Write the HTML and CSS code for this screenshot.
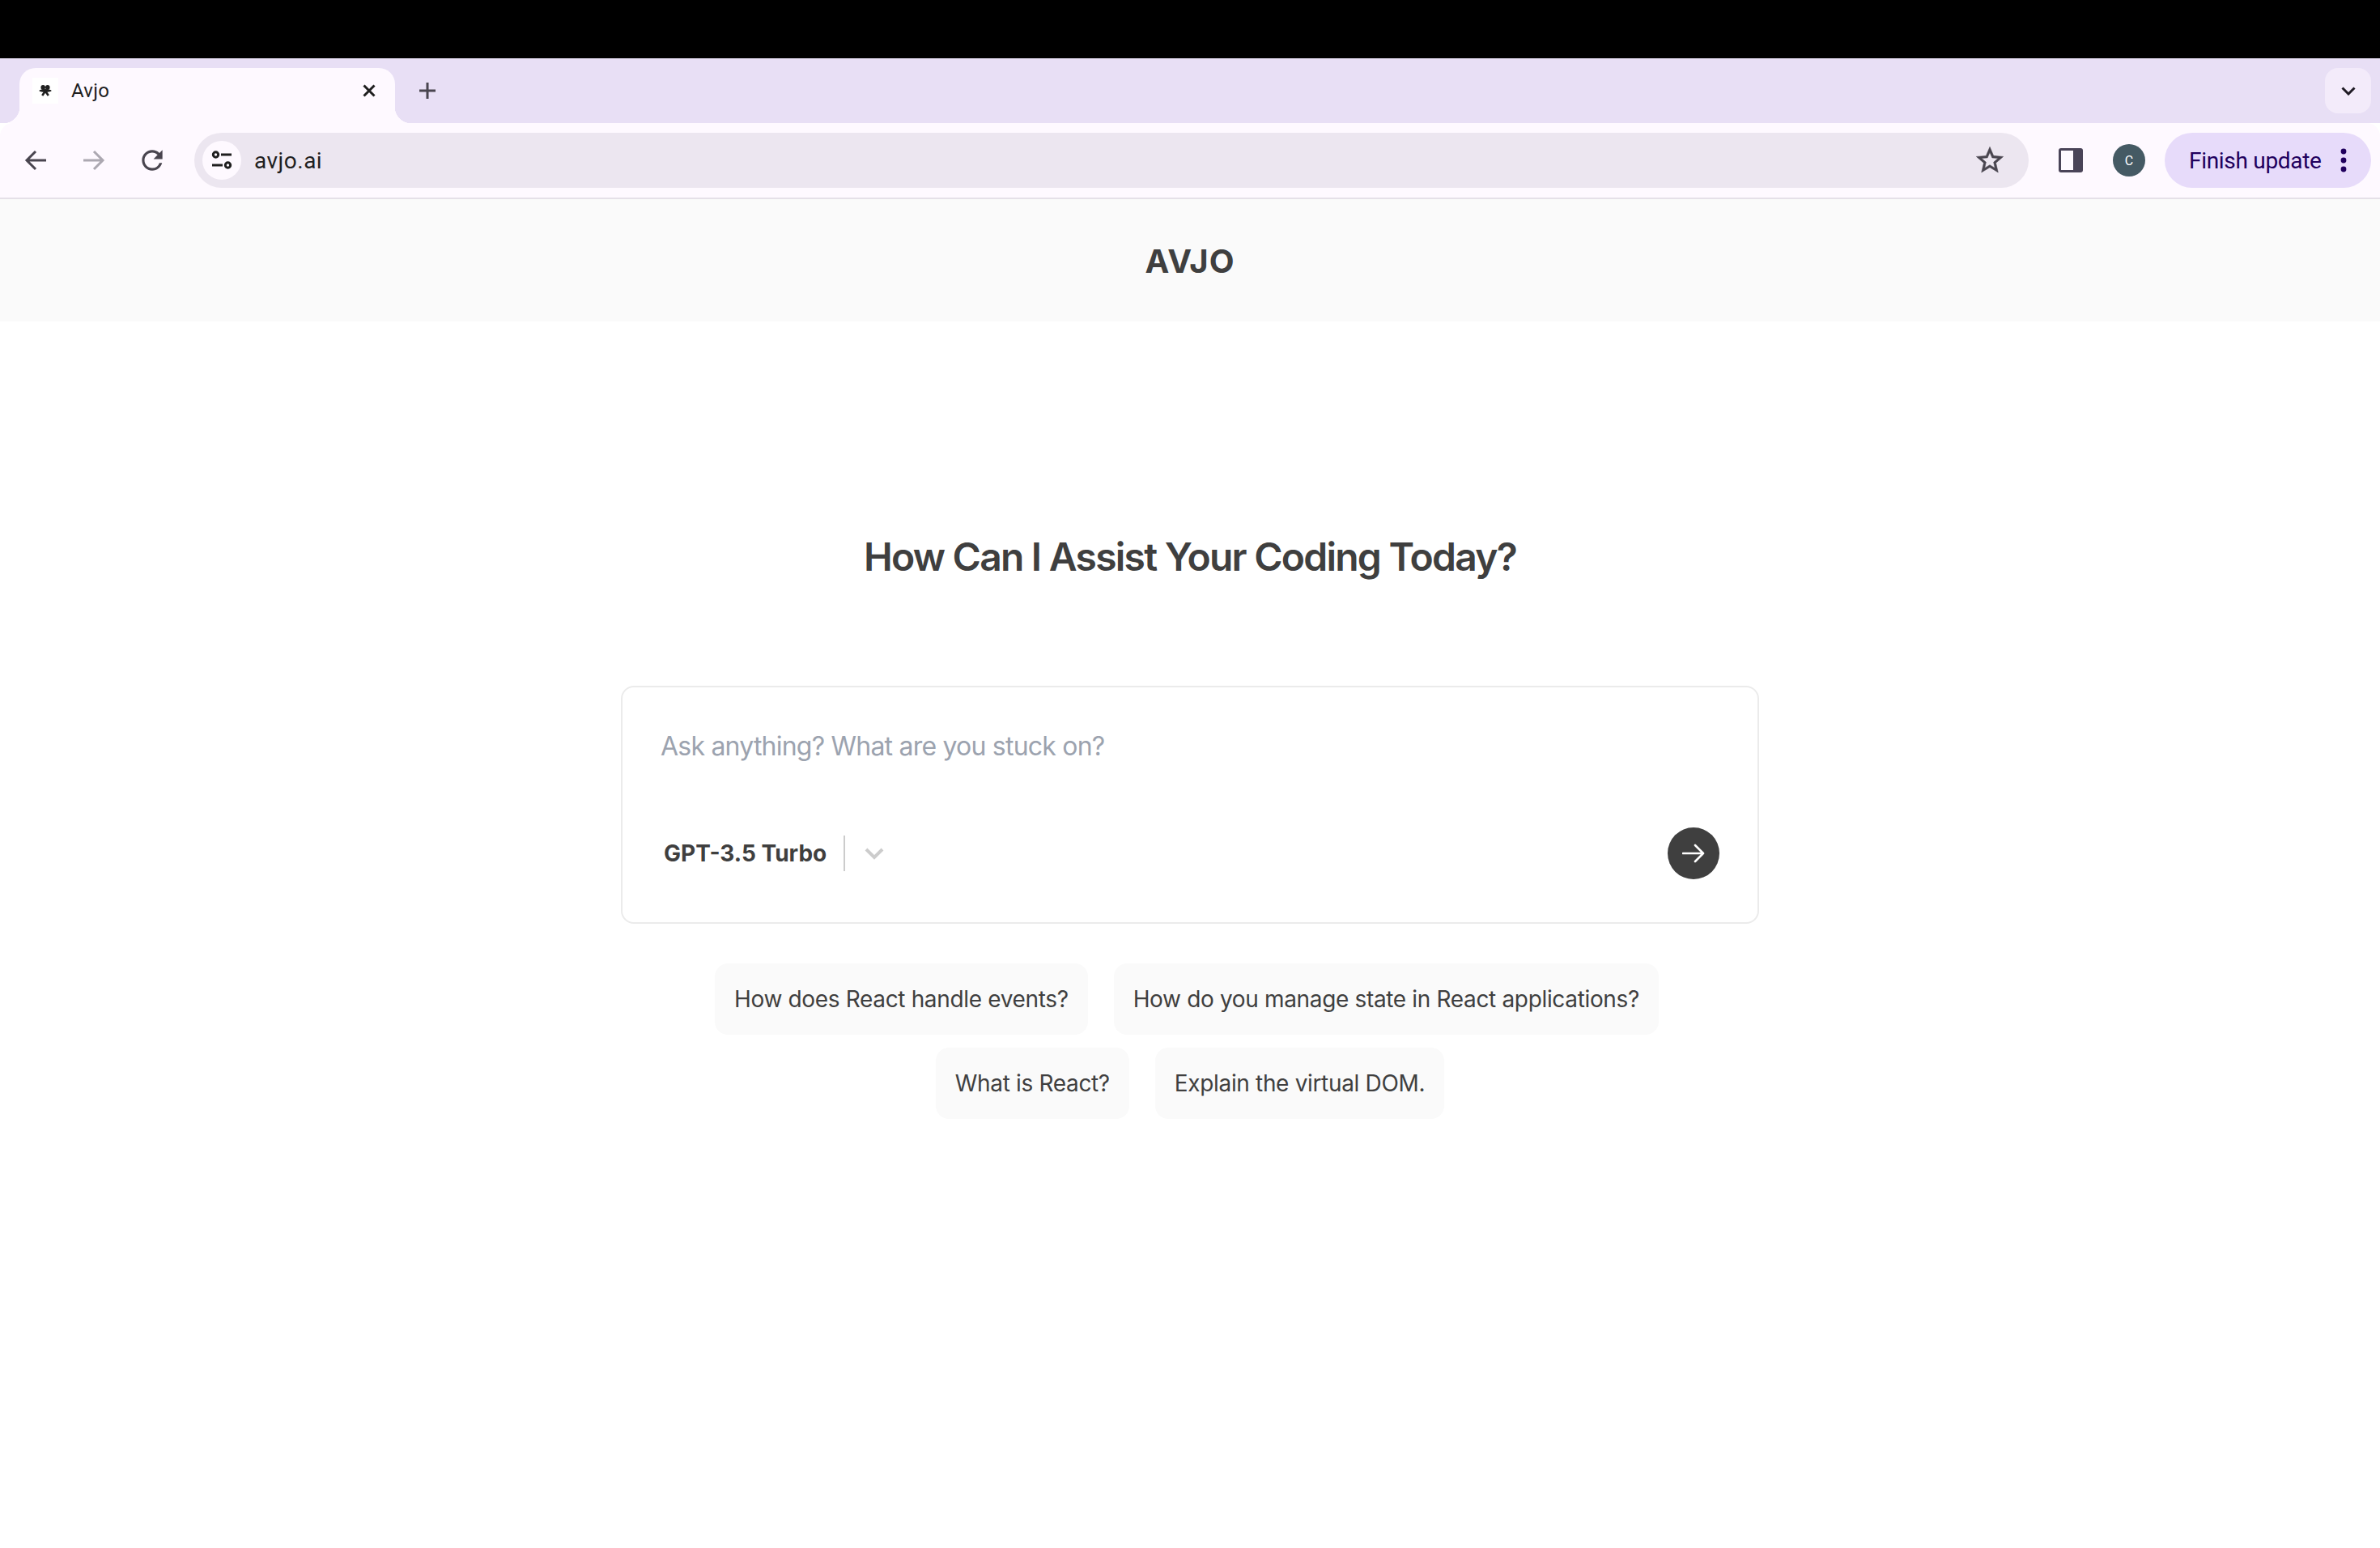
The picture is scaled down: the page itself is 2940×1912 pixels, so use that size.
FILE: index.html
```html
<!DOCTYPE html>
<html lang="en">
<head>
  <meta charset="UTF-8">
  <meta name="viewport" content="width=device-width, initial-scale=1.0">
  <title>Avjo</title>
  <link rel="stylesheet" href="styles.css">
</head>
<body>
  <div class="topbar"></div>

  <!-- tabs -->
  <div class="tabstrip">
    <div class="tab">
      <span class="favicon">
        <svg width="16" height="14" viewBox="0 0 16 14"><g fill="#1f1f1f"><ellipse cx="5.2" cy="3" rx="2.8" ry="2.9"/><ellipse cx="10.8" cy="3" rx="2.8" ry="2.9"/><ellipse cx="8" cy="7" rx="7.6" ry="1.9"/></g><path d="M8 7.5L4.2 13M8 7.5l3.8 5.5" stroke="#1f1f1f" stroke-width="2.6" fill="none"/></svg>
      </span>
      <span class="tab-title">Avjo</span>
      <svg class="tab-close" width="16" height="16" viewBox="0 0 16 16"><path d="M1.5 1.5l13 13M14.5 1.5l-13 13" stroke="#1f1f1f" stroke-width="3" fill="none"/></svg>
    </div>
    <div class="new-tab">
      <svg width="20" height="20" viewBox="0 0 20 20"><path d="M10 0v20M0 10h20" stroke="#49454f" stroke-width="3" fill="none"/></svg>
    </div>
    <div class="tab-list">
      <svg width="18" height="11" viewBox="0 0 18 11"><path d="M1.5 1.5L9 9l7.5-7.5" stroke="#1f1b24" stroke-width="3" fill="none"/></svg>
    </div>
  </div>

  <!-- toolbar -->
  <div class="toolbar">
    <div class="nav-btn">
      <svg width="28" height="28" viewBox="0 0 28 28"><path d="M27 14H4M14 3L3 14l11 11" stroke="#49454f" stroke-width="3" fill="none"/></svg>
    </div>
    <div class="nav-btn">
      <svg width="28" height="28" viewBox="0 0 28 28"><path d="M1 14h23M14 3l11 11-11 11" stroke="#aca8b1" stroke-width="3" fill="none"/></svg>
    </div>
    <div class="nav-btn">
      <svg width="38" height="38" viewBox="0 0 24 24"><path fill="#49454f" d="M17.65 6.35A7.958 7.958 0 0 0 12 4c-4.42 0-7.99 3.58-7.99 8s3.57 8 7.99 8c3.73 0 6.84-2.55 7.73-6h-2.08A5.99 5.99 0 0 1 12 18c-3.31 0-6-2.69-6-6s2.69-6 6-6c1.66 0 3.14.69 4.22 1.78L13 11h7V4l-2.35 2.35z"/></svg>
    </div>
    <div class="omnibox">
      <span class="site-info">
        <svg width="26" height="24" viewBox="0 0 26 24"><g fill="none" stroke="#1f1f1f" stroke-width="3"><circle cx="5.5" cy="5" r="3.2"/><path d="M12 5h13M1 18h13"/><circle cx="20.5" cy="18" r="3.2"/></g></svg>
      </span>
      <span class="url">avjo.ai</span>
      <svg class="star" width="40" height="40" viewBox="0 0 24 24"><path fill="#49454f" stroke="#49454f" stroke-width="0.3" d="M22 9.24l-7.19-.62L12 2 9.19 8.63 2 9.24l5.46 4.73L5.82 21 12 17.27 18.18 21l-1.63-7.03L22 9.24zM12 15.4l-3.76 2.27 1-4.28-3.32-2.88 4.38-.38L12 6.1l1.71 4.04 4.38.38-3.32 2.88 1 4.28L12 15.4z"/></svg>
    </div>
    <div class="nav-btn side-panel">
      <svg width="30" height="30" viewBox="0 0 30 30"><rect width="30" height="30" rx="3" fill="#4a4458"/><rect x="3" y="3" width="15" height="24" fill="#fef9ff"/></svg>
    </div>
    <div class="nav-btn">
      <span class="avatar">C</span>
    </div>
    <div class="update-btn">
      <span>Finish update</span>
      <svg width="8" height="30" viewBox="0 0 8 30"><g fill="#21005d"><circle cx="4" cy="4" r="3.4"/><circle cx="4" cy="15" r="3.4"/><circle cx="4" cy="26" r="3.4"/></g></svg>
    </div>
  </div>

  <!-- page -->
  <header class="site-header">AVJO</header>
  <main class="content">
    <h1 class="title">How Can I Assist Your Coding Today?</h1>
    <div class="ask-box">
      <div class="placeholder">Ask anything? What are you stuck on?</div>
      <div class="ask-footer">
        <span class="model">GPT-3.5 Turbo</span>
        <span class="model-sep"></span>
        <svg width="24" height="15" viewBox="0 0 24 15"><path d="M2 2l10 10L22 2" stroke="#cccccc" stroke-width="4" fill="none"/></svg>
        <span class="send">
          <svg width="28" height="24" viewBox="0 0 28 24"><path d="M1 12h25M16 2l10 10-10 10" stroke="#fff" stroke-width="2.6" stroke-linecap="round" stroke-linejoin="round" fill="none"/></svg>
        </span>
      </div>
    </div>
    <div class="chips">
      <span class="chip">How does React handle events?</span>
      <span class="chip chip-wide">How do you manage state in React applications?</span>
      <span class="chip">What is React?</span>
      <span class="chip">Explain the virtual DOM.</span>
    </div>
  </main>
</body>
</html>
```

FILE: styles.css
```css
* {
  margin: 0;
  padding: 0;
  box-sizing: border-box;
}
html, body {
  height: 100%;
}
body {
  background: #fff;
  font-family: "Inter", "Liberation Sans", sans-serif;
  color: #3f3f3f;
}
.topbar {
  height: 72px;
  background: #000;
}
.tabstrip {
  display: flex;
  align-items: flex-start;
  height: 80px;
  padding: 12px 11px 0 24px;
  background: #e8dff5;
}
.tab {
  position: relative;
  display: flex;
  align-items: center;
  width: 464px;
  height: 68px;
  padding: 0 24px 12px 16px;
  background: #fef9ff;
  border-radius: 20px 20px 0 0;
}
.tab::before,
.tab::after {
  content: "";
  position: absolute;
  bottom: 0;
  width: 20px;
  height: 20px;
}
.tab::before {
  left: -20px;
  background: radial-gradient(circle at 0 0, transparent 20px, #fef9ff 20.5px);
}
.tab::after {
  right: -20px;
  background: radial-gradient(circle at 100% 0, transparent 20px, #fef9ff 20.5px);
}
.favicon {
  display: flex;
  align-items: center;
  justify-content: center;
  width: 32px;
  height: 32px;
  background: #fff;
}
.tab-title {
  flex: 1;
  margin-left: 16px;
  font-family: "Roboto", sans-serif;
  font-size: 24px;
  letter-spacing: 0.3px;
  color: #1f1f1f;
}
.new-tab {
  display: flex;
  align-items: center;
  justify-content: center;
  width: 80px;
  height: 56px;
}
.tab-list {
  display: flex;
  align-items: center;
  justify-content: center;
  width: 57px;
  height: 56px;
  margin-left: auto;
  background: #f3ebfa;
  border-radius: 16px;
}
.toolbar {
  display: flex;
  align-items: center;
  height: 94px;
  padding: 0 11px 0 8px;
  background: #fef9ff;
  border-bottom: 2px solid #e5e0e8;
  border-radius: 16px 16px 0 0;
  position: relative;
}
.nav-btn {
  display: flex;
  align-items: center;
  justify-content: center;
  width: 72px;
  height: 68px;
  flex: none;
}
.omnibox {
  display: flex;
  align-items: center;
  flex: 1;
  height: 68px;
  margin-left: 16px;
  padding: 0 28px 0 10px;
  background: #ece6f0;
  border-radius: 34px;
}
.site-info {
  display: flex;
  align-items: center;
  justify-content: center;
  width: 48px;
  height: 48px;
  background: #fef9ff;
  border-radius: 50%;
}
.url {
  flex: 1;
  margin-left: 16px;
  font-family: "Roboto", sans-serif;
  font-size: 28px;
  letter-spacing: 0.5px;
  color: #1f1f1f;
}
.side-panel {
  margin-left: 16px;
}
.avatar {
  display: flex;
  align-items: center;
  justify-content: center;
  width: 40px;
  height: 40px;
  background: #455a64;
  border-radius: 50%;
  font-family: "Roboto", sans-serif;
  font-size: 16px;
  color: #fff;
}
.update-btn {
  display: flex;
  align-items: center;
  justify-content: space-between;
  width: 255px;
  height: 68px;
  margin-left: 8px;
  padding: 0 30px 0 30px;
  background: #e7dbfa;
  border-radius: 34px;
  font-family: "Roboto", sans-serif;
  font-size: 28px;
  letter-spacing: -0.3px;
  color: #21005d;
}
.site-header {
  height: 151px;
  background: #fafafa;
  font-size: 40px;
  font-weight: 700;
  letter-spacing: 1px;
  line-height: 153px;
  text-align: center;
}
.content {
  display: flex;
  flex-direction: column;
  align-items: center;
}
.title {
  margin-top: 255px;
  font-size: 48px;
  font-weight: 600;
  letter-spacing: -1.76px;
  line-height: 72px;
}
.ask-box {
  width: 1406px;
  margin-top: 123px;
  padding: 53px 47px 53px 48px;
  border: 2px solid #ebebeb;
  border-radius: 16px;
}
.placeholder {
  margin-left: -1px;
  font-size: 32px;
  letter-spacing: -0.78px;
  line-height: 40px;
  color: #9ca3af;
}
.ask-footer {
  display: flex;
  align-items: center;
  margin-top: 80px;
}
.model {
  padding-left: 3px;
  font-size: 28px;
  font-weight: 700;
}
.model-sep {
  width: 2px;
  height: 44px;
  margin: 0 24px 0 21px;
  background: #cccccc;
}
.send {
  display: flex;
  align-items: center;
  justify-content: center;
  width: 64px;
  height: 64px;
  margin-left: auto;
  background: #3f3f3f;
  border-radius: 50%;
}
.chips {
  display: flex;
  flex-wrap: wrap;
  justify-content: center;
  gap: 16px 32px;
  width: 1406px;
  margin-top: 49px;
}
.chip {
  padding: 0 24px;
  background: #fafafa;
  border-radius: 16px;
  font-size: 28px;
  letter-spacing: -0.34px;
  line-height: 88px;
}
.chip-wide {
  margin-right: 8px;
}
```
